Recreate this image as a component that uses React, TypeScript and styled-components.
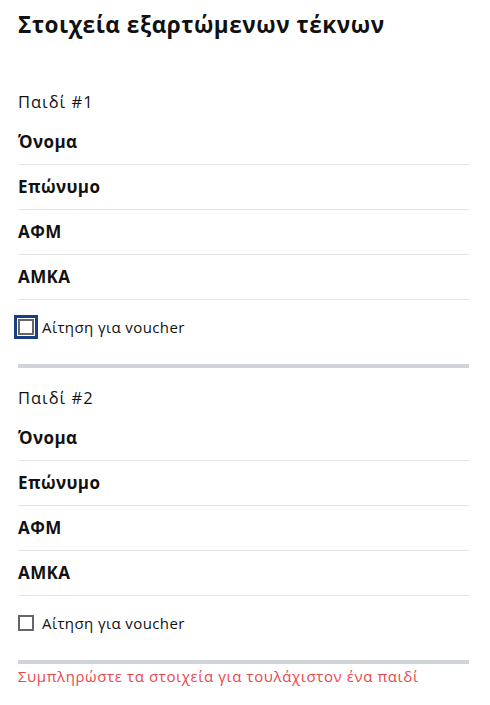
import React from "react";
import styled, { createGlobalStyle } from "styled-components";

const Global = createGlobalStyle`
  html, body { margin: 0; padding: 0; background: #fff; }
  body { font-family: "Open Sans", "Noto Sans", sans-serif; color: #111; }
  * { box-sizing: border-box; }
`;

const Page = styled.div`
  padding: 10px 21px 0 18px;
`;

const Title = styled.h1`
  margin: 0;
  font-size: 22.5px;
  line-height: 30px;
  font-weight: 700;
  letter-spacing: 0.55px;
`;

const Section = styled.section`
  padding-top: 18px;
  border-bottom: 4px solid #d1d3da;
  &:first-of-type {
    padding-top: 50px;
  }
`;

const ChildHeader = styled.div`
  font-size: 16.5px;
  line-height: 24px;
  letter-spacing: 1px;
  margin-bottom: 6px;
`;

const FieldRow = styled.div`
  height: 45px;
  display: flex;
  align-items: center;
  border-bottom: 1px solid #e5e5e5;
  font-size: 17px;
  font-weight: 700;
  letter-spacing: 0.4px;
  padding-bottom: 1px;
`;

const CheckRow = styled.label`
  display: flex;
  align-items: center;
  gap: 8px;
  height: 64px;
  padding-bottom: 10px;
  font-size: 15px;
  letter-spacing: 0.4px;
`;

const Box = styled.span<{ $focused?: boolean }>`
  width: 16px;
  height: 16px;
  border: 2px solid #666;
  background: #fff;
  flex: none;
  outline: ${(p) => (p.$focused ? "3px solid #1a3e85" : "none")};
  outline-offset: 1px;
`;

const ErrorText = styled.div`
  color: #e8474c;
  font-size: 15px;
  line-height: 24px;
  letter-spacing: 0.6px;
`;

const fields = ["Όνομα", "Επώνυμο", "ΑΦΜ", "ΑΜΚΑ"];

function Child({ n, focused }: { n: number; focused?: boolean }) {
  return (
    <Section>
      <ChildHeader>Παιδί #{n}</ChildHeader>
      {fields.map((f) => (
        <FieldRow key={f}>{f}</FieldRow>
      ))}
      <CheckRow>
        <Box $focused={focused} />
        Αίτηση για voucher
      </CheckRow>
    </Section>
  );
}

export default function App() {
  return (
    <>
      <Global />
      <Page>
        <Title>Στοιχεία εξαρτώμενων τέκνων</Title>
        <Child n={1} focused />
        <Child n={2} />
        <ErrorText>Συμπληρώστε τα στοιχεία για τουλάχιστον ένα παιδί</ErrorText>
      </Page>
    </>
  );
}
